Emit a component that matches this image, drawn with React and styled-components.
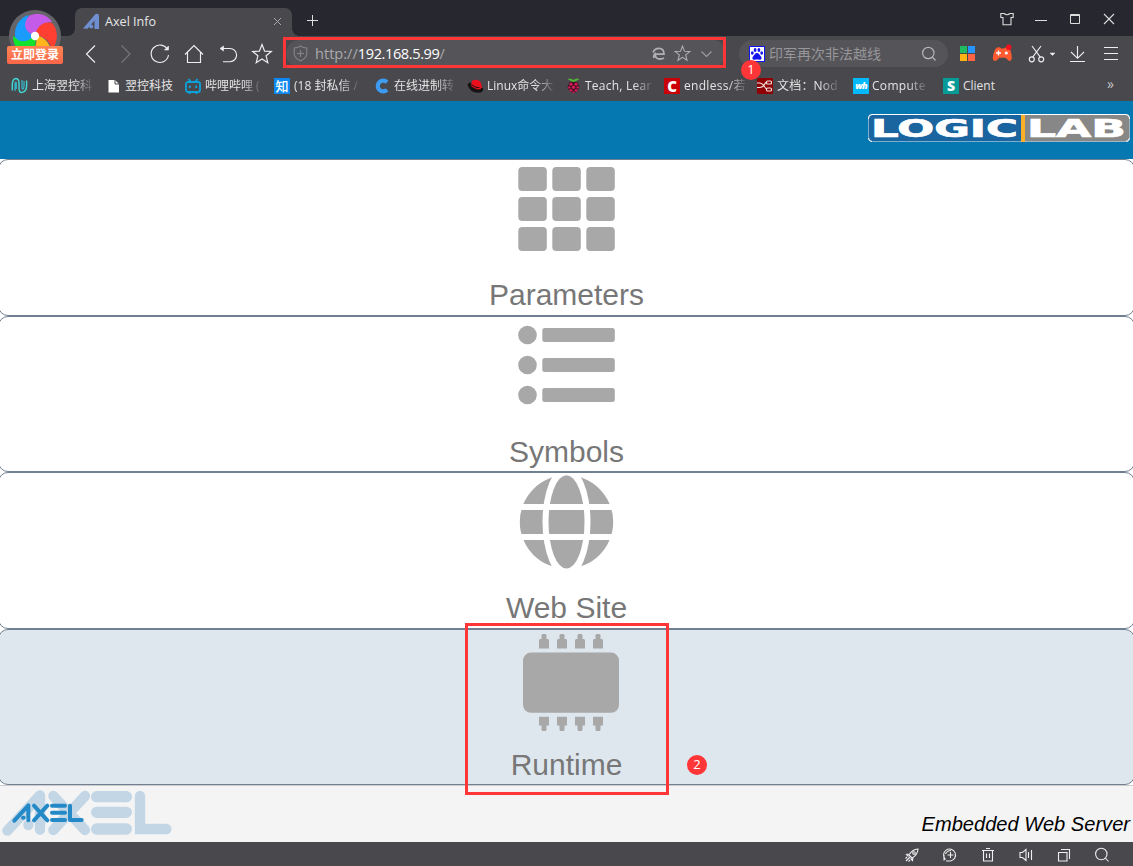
import React from 'react';
import styled, { createGlobalStyle, css } from 'styled-components';

const GlobalStyle = createGlobalStyle`
  * { box-sizing: border-box; }
  body { margin: 0; background: #fff; overflow: hidden; }
  svg { display: block; flex: none; }
`;

const uiFont = `"Open Sans", "Noto Sans CJK SC", sans-serif`;

const Window = styled.div`
  position: relative;
  width: 1133px;
  height: 866px;
  overflow: hidden;
  display: flex;
  flex-direction: column;
  font-family: ${uiFont};
`;

/* ---------- browser chrome ---------- */

const TabStrip = styled.div`
  height: 36px;
  background: #27272f;
  display: flex;
  align-items: flex-end;
  padding-left: 75px;
`;

const Tab = styled.div`
  position: relative;
  width: 217px;
  height: 28px;
  background: #49484d;
  border-radius: 7px 7px 0 0;
  display: flex;
  align-items: center;
  padding: 0 9px 1px 8px;
  color: #e6e6e6;
  font-size: 12.6px;
  gap: 5px;

  &::before,
  &::after {
    content: '';
    position: absolute;
    bottom: 0;
    width: 7px;
    height: 7px;
  }
  &::before {
    left: -7px;
    background: radial-gradient(circle at 0 0, transparent 6.5px, #49484d 7px);
  }
  &::after {
    right: -7px;
    background: radial-gradient(circle at 100% 0, transparent 6.5px, #49484d 7px);
  }
`;

const TabTitle = styled.span`
  flex: 1;
  white-space: nowrap;
`;

const NewTab = styled.div`
  margin: 0 0 9px 14px;
`;

const WindowButtons = styled.div`
  display: flex;
  align-items: center;
  gap: 18px;
  margin: 0 16px 9px auto;
`;

const Toolbar = styled.div`
  height: 35px;
  background: #49484d;
  display: flex;
  align-items: center;
  padding-left: 80px;
`;

const NavButtons = styled.div`
  display: flex;
  gap: 12.3px;
  width: 206px;
`;

const pill = css`
  height: 27px;
  border-radius: 14px;
  background: #555459;
  display: flex;
  align-items: center;
`;

const AddressBar = styled.div`
  ${pill}
  width: 440px;
  padding: 0 12px 0 7px;
  font-size: 14.6px;
  color: #a9a9ac;
`;

const Url = styled.span`
  flex: 1;
  margin-left: 7px;
  padding-bottom: 2px;
  white-space: nowrap;
  b { font-weight: 400; color: #fff; letter-spacing: -0.42px; }
`;

const AddressTools = styled.div`
  display: flex;
  align-items: center;
  gap: 8px;
`;

const SearchBox = styled.div`
  ${pill}
  width: 209px;
  margin-left: 13px;
  padding: 0 11px 0 10px;
  font-size: 14px;
  color: #97979a;
`;

const SearchText = styled.span`
  flex: 1;
  margin-left: 4px;
  padding-bottom: 2px;
  white-space: nowrap;
`;

const ToolButtons = styled.div`
  display: flex;
  align-items: center;
  margin-left: 12px;
`;

const ToolSlot = styled.div`
  width: ${(p) => p.$w}px;
`;

const Bookmarks = styled.div`
  height: 30px;
  background: #49484d;
  display: grid;
  grid-template-columns: 96px 78px 89px 100px 93px 99px 98px 93px 96px 90px 162px 16px;
  padding-left: 11px;
  align-items: center;
  border-bottom: 1px solid #454950;
`;

const Bookmark = styled.div`
  display: flex;
  align-items: center;
  gap: ${(p) => p.$gap}px;
  color: #e4e4e4;
  font-size: 12px;
`;

const BookmarkLabel = styled.span`
  white-space: nowrap;
  line-height: 18px;
  letter-spacing: ${(p) => p.$ls || 0}px;
  ${(p) => p.$fade && css`mask-image: linear-gradient(90deg, #000 calc(100% - 18px), rgba(0, 0, 0, 0.15));`}
`;

const More = styled.span`
  color: #c4c4c6;
  font-size: 14px;
  line-height: 18px;
  padding-bottom: 3px;
  margin-left: 2px;
`;

const Glyph = styled.span`
  width: 16px;
  height: 16px;
  flex: none;
  display: flex;
  align-items: center;
  justify-content: center;
  background: ${(p) => p.$bg};
  color: #fff;
  font-weight: ${(p) => p.$weight || 800};
  font-style: ${(p) => (p.$italic ? 'italic' : 'normal')};
  font-size: ${(p) => p.$size || 13}px;
  line-height: 16px;
  letter-spacing: ${(p) => p.$ls || 0}px;
`;

const Account = styled.div`
  position: absolute;
  left: 7px;
  top: 9px;
  width: 56px;
  display: flex;
  flex-direction: column;
  align-items: center;
`;

const LoginBadge = styled.div`
  width: 56px;
  height: 18px;
  margin-top: -17px;
  border-radius: 2px;
  background: linear-gradient(#ff8453, #fa6649);
  color: #fff;
  font-size: 12px;
  font-weight: 700;
  line-height: 17px;
  text-align: center;
  z-index: 1;
`;

/* ---------- web page ---------- */

const Header = styled.header`
  height: 58px;
  background: #0678b1;
  display: flex;
  justify-content: flex-end;
  padding: 13px 3px 0 0;
`;

const Menu = styled.nav`
  display: flex;
  flex-direction: column;
  margin: 0 -2px;
  font-family: "Liberation Sans", Arial, sans-serif;
`;

const MenuCard = styled.a`
  height: ${(p) => p.$h}px;
  border: 1px solid #708090;
  border-radius: 10px;
  background: ${(p) => (p.$active ? '#dfe7ee' : '#fff')};
  display: flex;
  flex-direction: column;
  align-items: center;
  color: #777;
  font-size: 30px;
  line-height: 34px;
`;

const Footer = styled.footer`
  height: 57px;
  background: #f4f4f4;
  border-top: 1px solid #ccc;
  display: flex;
  justify-content: space-between;
  font-family: "Liberation Sans", Arial, sans-serif;
  font-size: 20.1px;
  line-height: 24px;
  font-style: italic;
  color: #000;
  padding-right: 3px;
`;

const FooterText = styled.span`
  padding-top: 26px;
`;

const StatusBar = styled.div`
  height: 24px;
  background: #49484d;
  display: flex;
  align-items: center;
  justify-content: flex-end;
  gap: 22px;
  padding: 2px 23px 0 0;
`;

/* ---------- annotations ---------- */

const Marker = styled.div`
  position: absolute;
  left: ${(p) => p.$x}px;
  top: ${(p) => p.$y}px;
  width: ${(p) => p.$w}px;
  height: ${(p) => p.$h}px;
  border: 3px solid #fe3637;
`;

const Step = styled.div`
  position: absolute;
  left: ${(p) => p.$x}px;
  top: ${(p) => p.$y}px;
  width: 20px;
  height: 20px;
  border-radius: 50%;
  background: #fe3637;
  color: #fff;
  font-size: 13px;
  line-height: 19px;
  text-align: center;
`;

/* ---------- icons ---------- */

const Line = ({ w = 22, h = w, box, color = '#eeeeee', sw = 1.15, children }) => (
  <svg width={w} height={h} viewBox={box || `0 0 ${w} ${h}`} fill="none" stroke={color} strokeWidth={sw}>
    {children}
  </svg>
);

const Pinwheel = () => (
  <svg width="54" height="54" viewBox="-27 -27 54 54">
    <circle r="26" fill="#656468" />
    <path d="M0-1 C9 0 15 7 16 15 C10 22 3 22-5 18 C1 12 3 6 0-1Z" fill="#ffb51b" />
    <path d="M0-1 C2 8-1 16-8 20 C-17 17-22 9-22 0 C-15 5-7 4 0-1Z" fill="#12e32c" />
    <path d="M0-1 C-7 7-16 7-20 1 C-21-10-15-19-6-21 C-11-14-8-5 0-1Z" fill="#1a9bff" />
    <path d="M0-1 C-10-3-13-12-6-20 C2-24 12-22 17-14 C9-14 3-9 0-1Z" fill="#c45be9" />
    <path d="M0-1 C2-10 9-15 17-13 C23-7 24 5 17 14 C15 5 9 0 0-1Z" fill="#ff3f32" />
    <circle r="4.2" fill="#fff" />
  </svg>
);

const AxelFavicon = () => (
  <svg width="17" height="17" viewBox="0 0 17 17" fill="#6f8fd0">
    <path d="M0 15.5 L12.5 1 Q16 0 16 3 V16 H11.5 V7.5 L4.5 15.8 Z" />
    <circle cx="8.2" cy="13.6" r="2" />
  </svg>
);

const Shirt = () => (
  <Line w={16} sw={1.1} color="#ddd">
    <path d="M5 2.5 H1.8 V6.5 H4 V13.8 H12 V6.5 H14.2 V2.5 H11 Q8 5 5 2.5Z" />
  </Line>
);
const Star = ({ size = 22, color, sw = 1.2 }) => (
  <Line w={size} box="0 0 22 22" color={color} sw={sw}>
    <path d="M11 1.5 L13.6 8.2 L20.3 8.5 L15.1 12.8 L16.8 19.7 L11 16 L5.2 19.7 L6.9 12.8 L1.7 8.5 L8.4 8.2Z" />
  </Line>
);
const Magnifier = ({ size, color, sw = 1.2 }) => (
  <Line w={size} box="0 0 16 16" color={color} sw={sw}>
    <circle cx="7.3" cy="7" r="5.7" />
    <path d="M11.3 11 L14.5 14.5" />
  </Line>
);

const BaiduPaw = () => (
  <svg width="16" height="16" viewBox="0 0 16 16">
    <rect width="16" height="16" fill="#fff" />
    <rect x="0.5" y="0.5" width="15" height="15" fill="none" stroke="#1414ee" />
    <g fill="#1414ee">
      <ellipse cx="3.3" cy="7" rx="1.4" ry="1.8" />
      <ellipse cx="6.1" cy="4" rx="1.4" ry="1.9" />
      <ellipse cx="9.9" cy="4" rx="1.4" ry="1.9" />
      <ellipse cx="12.7" cy="7" rx="1.4" ry="1.8" />
      <path d="M8 7 C10 7 10.5 9 12 10.5 C13.5 12.5 12 14 10.5 13.7 C9 13.3 7 13.3 5.5 13.7 C4 14 2.5 12.5 4 10.5 C5.5 9 6 7 8 7Z" />
    </g>
  </svg>
);

const Gamepad = () => (
  <svg width="22" height="20" viewBox="0 0 22 20">
    <path d="M5 3.5 Q8 2.5 9 4.5 H12 Q14 2.5 16.5 3.5 Q19.5 6 19.8 14 Q19.5 18 16.5 16.5 L13.5 13.8 H7.5 L4.5 16.5 Q1 18 .8 14 Q1.5 6 5 3.5Z" fill="#ff5a30" />
    <path d="M6.5 6.5 V11.5 M4 9 H9" stroke="#fff" strokeWidth="1.4" />
    <circle cx="14.3" cy="9" r="1.6" fill="#fff" />
    <circle cx="16.7" cy="3.2" r="2.7" fill="#f60f1e" />
  </svg>
);

const bookmarkIcons = {
  wave: (
    <svg width="17" height="17" viewBox="0 0 17 17" fill="none" strokeWidth="1.5">
      <path d="M1.3 13.5 V7 Q1.8 1.5 5 1.5 Q8 2 8 6 V11 Q8 15.5 10.5 15.5 Q15.5 15 15.6 9 V3.5" stroke="#43d3d0" />
      <path d="M4 14 V7 Q4.3 4.5 5.3 5.5 V12 M11 3 V10 Q11 12.5 12 12 Q13 11.5 13 9 V4" stroke="#35bcd0" strokeWidth="1.2" />
    </svg>
  ),
  page: (
    <svg width="14" height="16" viewBox="0 0 14 16">
      <path d="M1.5 2 H8 L12 6 V14.5 H1.5Z" fill="#fff" />
      <path d="M8 2 V6 H12" fill="none" stroke="#49484d" strokeWidth="1" />
    </svg>
  ),
  tv: (
    <svg width="16" height="16" viewBox="0 0 16 16" fill="none" stroke="#0ba2dc" strokeWidth="1.8">
      <rect x="1" y="4" width="14" height="10" rx="2" />
      <path d="M3.5 1 L5.5 3.5 M12.5 1 L10.5 3.5 M4.8 7.5 V10 M11.2 7.5 V10" />
      <path d="M3.5 15 H5.5 M10.5 15 H12.5" />
    </svg>
  ),
  zhi: <Glyph $bg="#0c88f0" $weight={500} $size={13}>知</Glyph>,
  ring: (
    <svg width="16" height="16" viewBox="0 0 16 16" fill="none">
      <path d="M13 4.2 A5.4 5.4 0 1 0 13 11.8" stroke="#3d9cf0" strokeWidth="4.2" />
    </svg>
  ),
  hat: (
    <svg width="17" height="16" viewBox="0 0 17 16">
      <path d="M0.5 7 Q1 4.5 4 4.5 L5 7 L16 10 Q17 14.5 11 14.8 Q3 14.5 .5 7Z" fill="#171214" />
      <path d="M5.5 2.2 Q8 1 12 2.5 Q14.5 4.5 14.8 9.5 Q13.5 12.3 9.5 11 Q5 9.5 4 7Z" fill="#ee0f1c" />
      <path d="M4.5 6.6 Q7.5 9.8 12.5 9.7" stroke="#171214" fill="none" />
    </svg>
  ),
  berry: (
    <svg width="15" height="16" viewBox="0 0 15 16">
      <path d="M7.5 4.5 L1.5 1 Q5-.5 7.5 2 Q10-.5 13.5 1Z" fill="#53b437" />
      <path d="M7.5 4 Q12 3 12.5 7 Q14.5 10 11.5 12.5 Q8 17 3.5 12.5 Q.5 10 2.5 7 Q3 3 7.5 4Z" fill="#3b1020" />
      <g fill="#cf1d55">
        <circle cx="5" cy="6.2" r="1.6" /><circle cx="10" cy="6.2" r="1.6" />
        <circle cx="7.5" cy="9.3" r="1.7" /><circle cx="3.3" cy="9.5" r="1.2" />
        <circle cx="11.7" cy="9.5" r="1.2" /><circle cx="5" cy="12.3" r="1.4" />
        <circle cx="10" cy="12.3" r="1.4" /><circle cx="7.5" cy="14.3" r="1.1" />
      </g>
    </svg>
  ),
  c: <Glyph $bg="#c80206" $size={15}>C</Glyph>,
  node: (
    <svg width="16" height="16" viewBox="0 0 16 16">
      <rect width="16" height="16" rx="1" fill="#8f0004" />
      <g fill="none" stroke="#f2e4e4" strokeWidth="1.1">
        <path d="M0 5 H3 Q5 5 7 8 T10 11.5 M0 9.5 H3 Q6 9.5 7.5 6.5 T10 4.5" />
        <rect x="9.5" y="3" width="5" height="3" rx="1" />
        <rect x="9.5" y="10" width="5" height="3" rx="1" />
      </g>
    </svg>
  ),
  wh: <Glyph $bg="#02b9fb" $size={9} $ls={-0.8} $italic>wh</Glyph>,
  s: <Glyph $bg="#079b98" $size={14}>S</Glyph>,
};

const bookmarks = [
  { icon: 'wave', label: '上海翌控科', gap: 4, fade: true },
  { icon: 'page', label: '翌控科技', gap: 4 },
  { icon: 'tv', label: '哔哩哔哩 (', gap: 4, fade: true },
  { icon: 'zhi', label: '(18 封私信 /', gap: 4, fade: true },
  { icon: 'ring', label: '在线进制转', gap: 4, fade: true },
  { icon: 'hat', label: 'Linux命令大', gap: 3, fade: true },
  { icon: 'berry', label: 'Teach, Lear', gap: 4, ls: 0.25, fade: true },
  { icon: 'c', label: 'endless/若', gap: 4, ls: 0.3, fade: true },
  { icon: 'node', label: '文档：Nod', gap: 4, ls: 0.2, fade: true },
  { icon: 'wh', label: 'Compute', gap: 3, ls: 0.3, fade: true },
  { icon: 's', label: 'Client', gap: 4 },
];

const LogicLabLogo = () => (
  <svg width="262" height="28" viewBox="0 0 262 28" fontFamily="DejaVu Sans" fontWeight="700" fontSize="24.5" fill="#fff">
    <rect x="0.5" y="0.5" width="261" height="27" rx="4" fill="#1a64a0" />
    <path d="M157 0.5 H258 Q261.5 0.5 261.5 4 V24 Q261.5 27.5 258 27.5 H157Z" fill="#878787" />
    <rect x="0.5" y="0.5" width="261" height="27" rx="4" fill="none" stroke="#fff" strokeOpacity="0.45" />
    <path d="M0.5 5 V4 Q0.5 0.5 4 0.5 H258 Q261.5 0.5 261.5 4 V5 M0.5 24 Q0.5 27.5 4 27.5 M261.5 24 Q261.5 27.5 258 27.5" fill="none" stroke="#fff" />
    <rect x="153" y="1" width="4" height="27" fill="#fbb02a" />
    <g stroke="#fff" strokeWidth="0.7">
      <text x="3" y="22.8" textLength="147" lengthAdjust="spacingAndGlyphs">LOGIC</text>
      <text x="159" y="22.8" textLength="99" lengthAdjust="spacingAndGlyphs">LAB</text>
    </g>
  </svg>
);

const AxelLogo = () => (
  <svg width="180" height="56" viewBox="0 48 540 168" fill="none" strokeLinecap="round" strokeLinejoin="round">
    <g stroke="#c2d6e6" strokeWidth="31">
      <path d="M22 182 L120 76 V179 M85 164 V165" />
      <path d="M160 78 L255 180 M255 78 L160 180" />
      <path d="M290 80 H379 M290 127 H379 M290 177 H379" strokeWidth="34" />
      <path d="M420 78 V177 H499" strokeLinejoin="miter" />
    </g>
    <g stroke="#2389c7" strokeWidth="12">
      <path d="M43 152 L85 106 V151 M69 143 H71" />
      <path d="M102 107 L142 151 M142 107 L102 151" />
      <path d="M156 107 H195 M156 128 H195 M156 150 H195" />
      <path d="M210 107 V150 H245" />
    </g>
  </svg>
);

const cardIcons = {
  grid: [7, 37, 67].map((y) => [7.3, 41.3, 75.3].map((x) => (
    <rect key={`${x}-${y}`} x={x} y={y} width="28.5" height="24" rx="4" />
  ))),
  list: [18, 48, 78].map((y) => (
    <g key={y}>
      <circle cx="16.5" cy={y} r="9.3" />
      <rect x="31.3" y={y - 7} width="72.5" height="14" rx="2.5" />
    </g>
  )),
  globe: (
    <>
      <circle cx="55.5" cy="48.9" r="46.7" />
      <ellipse cx="55.5" cy="48.9" rx="24" ry="56" fill="#fff" />
      <ellipse cx="55.5" cy="48.9" rx="18" ry="46.7" />
      <path d="M0 31 H111 V37 H0Z M0 61 H111 V67 H0Z" fill="#fff" />
    </>
  ),
  chip: (
    <>
      <rect x="12" y="22.6" width="96" height="60.2" rx="8" />
      {[28, 46, 64, 82].map((x) => (
        <path
          key={x}
          d={`M${x} 18.5 V10 L${x + 1} 9 H${x + 2.5} V5 L${x + 3.5} 4 H${x + 6.5} L${x + 7.5} 5 V9 H${x + 9} L${x + 10} 10 V18.5Z
             M${x} 86.7 H${x + 10} V95.5 H${x + 7.5} V100 L${x + 6.5} 101 H${x + 3.5} L${x + 2.5} 100 V95.5 H${x}Z`}
        />
      ))}
    </>
  ),
};

const cards = [
  { label: 'Parameters', icon: 'grid', h: 157 },
  { label: 'Symbols', icon: 'list', h: 156 },
  { label: 'Web Site', icon: 'globe', h: 157 },
  { label: 'Runtime', icon: 'chip', h: 156, active: true },
];

export default function App() {
  return (
    <Window>
      <GlobalStyle />
      <TabStrip>
        <Tab>
          <AxelFavicon />
          <TabTitle>Axel Info</TabTitle>
          <Line w={11} color="#aaa" sw={1}><path d="M2 2 L9 9 M9 2 L2 9" /></Line>
        </Tab>
        <NewTab>
          <Line w={13} color="#ddd" sw={1}><path d="M6.5 1 V12 M1 6.5 H12" /></Line>
        </NewTab>
        <WindowButtons>
          <Shirt />
          <Line w={16} color="#ddd" sw={1}><path d="M2 9.5 H14" /></Line>
          <Line w={16} color="#ddd" sw={1}><path d="M3.5 3.5 H12.5 V12.5 H3.5Z M3 4.5 H13" /></Line>
          <Line w={16} color="#ddd" sw={1.1}><path d="M3 3 L13 13 M13 3 L3 13" /></Line>
        </WindowButtons>
      </TabStrip>

      <Toolbar>
        <NavButtons>
          <Line><path d="M15 2.5 L6.5 11 L15 19.5" /></Line>
          <Line color="#77777b"><path d="M7.5 2.5 L16 11 L7.5 19.5" /></Line>
          <Line>
            <path d="M18.5 6.5 A8.7 8.7 0 1 0 19.5 12" />
            <path d="M19.5 3 V7 H15.5Z" fill="#eee" strokeWidth="0.6" />
          </Line>
          <Line><path d="M2 11.5 L11 2.5 L20 11.5 M4.5 9.5 V19.5 H17.5 V9.5" /></Line>
          <Line>
            <path d="M4 5.5 H13 A6.6 6.6 0 0 1 13 18.7 H6" />
            <path d="M6.5 3 L3 5.5 L6.5 8Z" fill="#eee" strokeWidth="0.6" />
          </Line>
          <Star size={22} />
        </NavButtons>
        <AddressBar>
          <Line w={15} h={17} color="#858589" sw={1.1}>
            <path d="M7.5 1 Q10 3 13.8 3 V9 Q13.5 13 7.5 16 Q1.5 13 1.2 9 V3 Q5 3 7.5 1Z M7.5 5 V12 M4 8.5 H11" />
          </Line>
          <Url>http://<b>192.168.5.99</b>/</Url>
          <AddressTools>
            <Line w={15} color="#b0b0b2" sw={1.8}>
              <path d="M4.5 8.2 H13 Q13 2.3 8 2.3 Q3.5 2.3 2 6.5 M4.3 8 Q4 13 9 13 Q11.5 13 13 12 M5 7 Q2 9 3 12" />
            </Line>
            <Star size={17} color="#b0b0b2" sw={1.4} />
            <Line w={15} h={13} color="#a0a0a3" sw={1.1}><path d="M2.5 4.5 L7.5 9.5 L12.5 4.5" /></Line>
          </AddressTools>
        </AddressBar>
        <SearchBox>
          <BaiduPaw />
          <SearchText>印军再次非法越线</SearchText>
          <Magnifier size={16} color="#b5b5b7" />
        </SearchBox>
        <ToolButtons>
          <ToolSlot $w={32}>
            <svg width="15" height="15" viewBox="0 0 15 15">
              <rect width="7" height="7" fill="#20bb61" />
              <rect x="8" width="7" height="7" fill="#2596ff" />
              <rect y="8" width="7" height="7" fill="#ffb414" />
              <rect x="8" y="8" width="7" height="7" fill="#ff6545" />
            </svg>
          </ToolSlot>
          <ToolSlot $w={36}><Gamepad /></ToolSlot>
          <ToolSlot $w={40}>
            <Line w={29} h={18}>
              <path d="M4 1 L12.3 12.2 M13 1 L4.7 12.2" />
              <circle cx="3.8" cy="14.3" r="2.5" />
              <circle cx="13.2" cy="14.3" r="2.5" />
              <path d="M22 8 H27 L24.5 10.5Z" fill="#eee" strokeWidth="0.5" />
            </Line>
          </ToolSlot>
          <ToolSlot $w={35}>
            <Line w={19} h={18}><path d="M9.5 1 V13 M3 7 L9.5 13.3 L16 7 M2 16.5 H17" /></Line>
          </ToolSlot>
          <ToolSlot $w={16}>
            <Line w={16} sw={1.1}><path d="M1 1.5 H15 M1 7.5 H15 M1 13.5 H15" /></Line>
          </ToolSlot>
        </ToolButtons>
      </Toolbar>

      <Bookmarks>
        {bookmarks.map((b) => (
          <Bookmark key={b.label} $gap={b.gap}>
            {bookmarkIcons[b.icon]}
            <BookmarkLabel $ls={b.ls} $fade={b.fade}>{b.label}</BookmarkLabel>
          </Bookmark>
        ))}
        <More>»</More>
      </Bookmarks>

      <Header><LogicLabLogo /></Header>
      <Menu>
        {cards.map((c) => (
          <MenuCard key={c.label} $h={c.h} $active={c.active}>
            <svg width="111" height="118" viewBox="0 0 111 118" fill="#a8a8a8">{cardIcons[c.icon]}</svg>
            {c.label}
          </MenuCard>
        ))}
      </Menu>
      <Footer>
        <AxelLogo />
        <FooterText>Embedded Web Server</FooterText>
      </Footer>

      <StatusBar>
        <Line w={16} sw={1.1}>
          <path d="M5 8 Q8 2.5 14 2 Q13.5 8 8 11Z M6 7 L2.5 7.5 L4.5 9.5 M9 10 L8.5 13.5 L6.5 11.5 M2 14 L6 10 M1.5 11.5 L3 10 M4.5 14.5 L6 13" />
          <circle cx="10" cy="6" r="1.3" />
        </Line>
        <Line w={16} sw={1.1}>
          <path d="M3.5 12.5 A6 6 0 1 1 8.5 14 H4 M2 13.5 V8 M8.5 5 V11 M5.5 8 H11.5 M3.5 7 Q5 3.5 9 3.5" />
        </Line>
        <Line w={16} sw={1.1}><path d="M2 3.5 H14 M6 1.5 H10 M3.5 3.5 V14 H12.5 V3.5 M6.5 6.5 V11 M9.5 6.5 V11" /></Line>
        <Line w={16} sw={1.1}><path d="M2 5.5 H4.5 L8 2.5 V13.5 L4.5 10.5 H2Z M10.5 5 V11 M13.5 3 V13" /></Line>
        <Line w={16} sw={1.1}><path d="M2.5 5.5 H11 V14 H2.5Z M5 2.5 H13.5 V12" /></Line>
        <Magnifier size={16} sw={1.1} />
      </StatusBar>

      <Account>
        <Pinwheel />
        <LoginBadge>立即登录</LoginBadge>
      </Account>
      <Marker $x={283} $y={37} $w={443} $h={31} />
      <Marker $x={465} $y={623} $w={204} $h={172} />
      <Step $x={741} $y={60}>1</Step>
      <Step $x={687} $y={755}>2</Step>
    </Window>
  );
}
